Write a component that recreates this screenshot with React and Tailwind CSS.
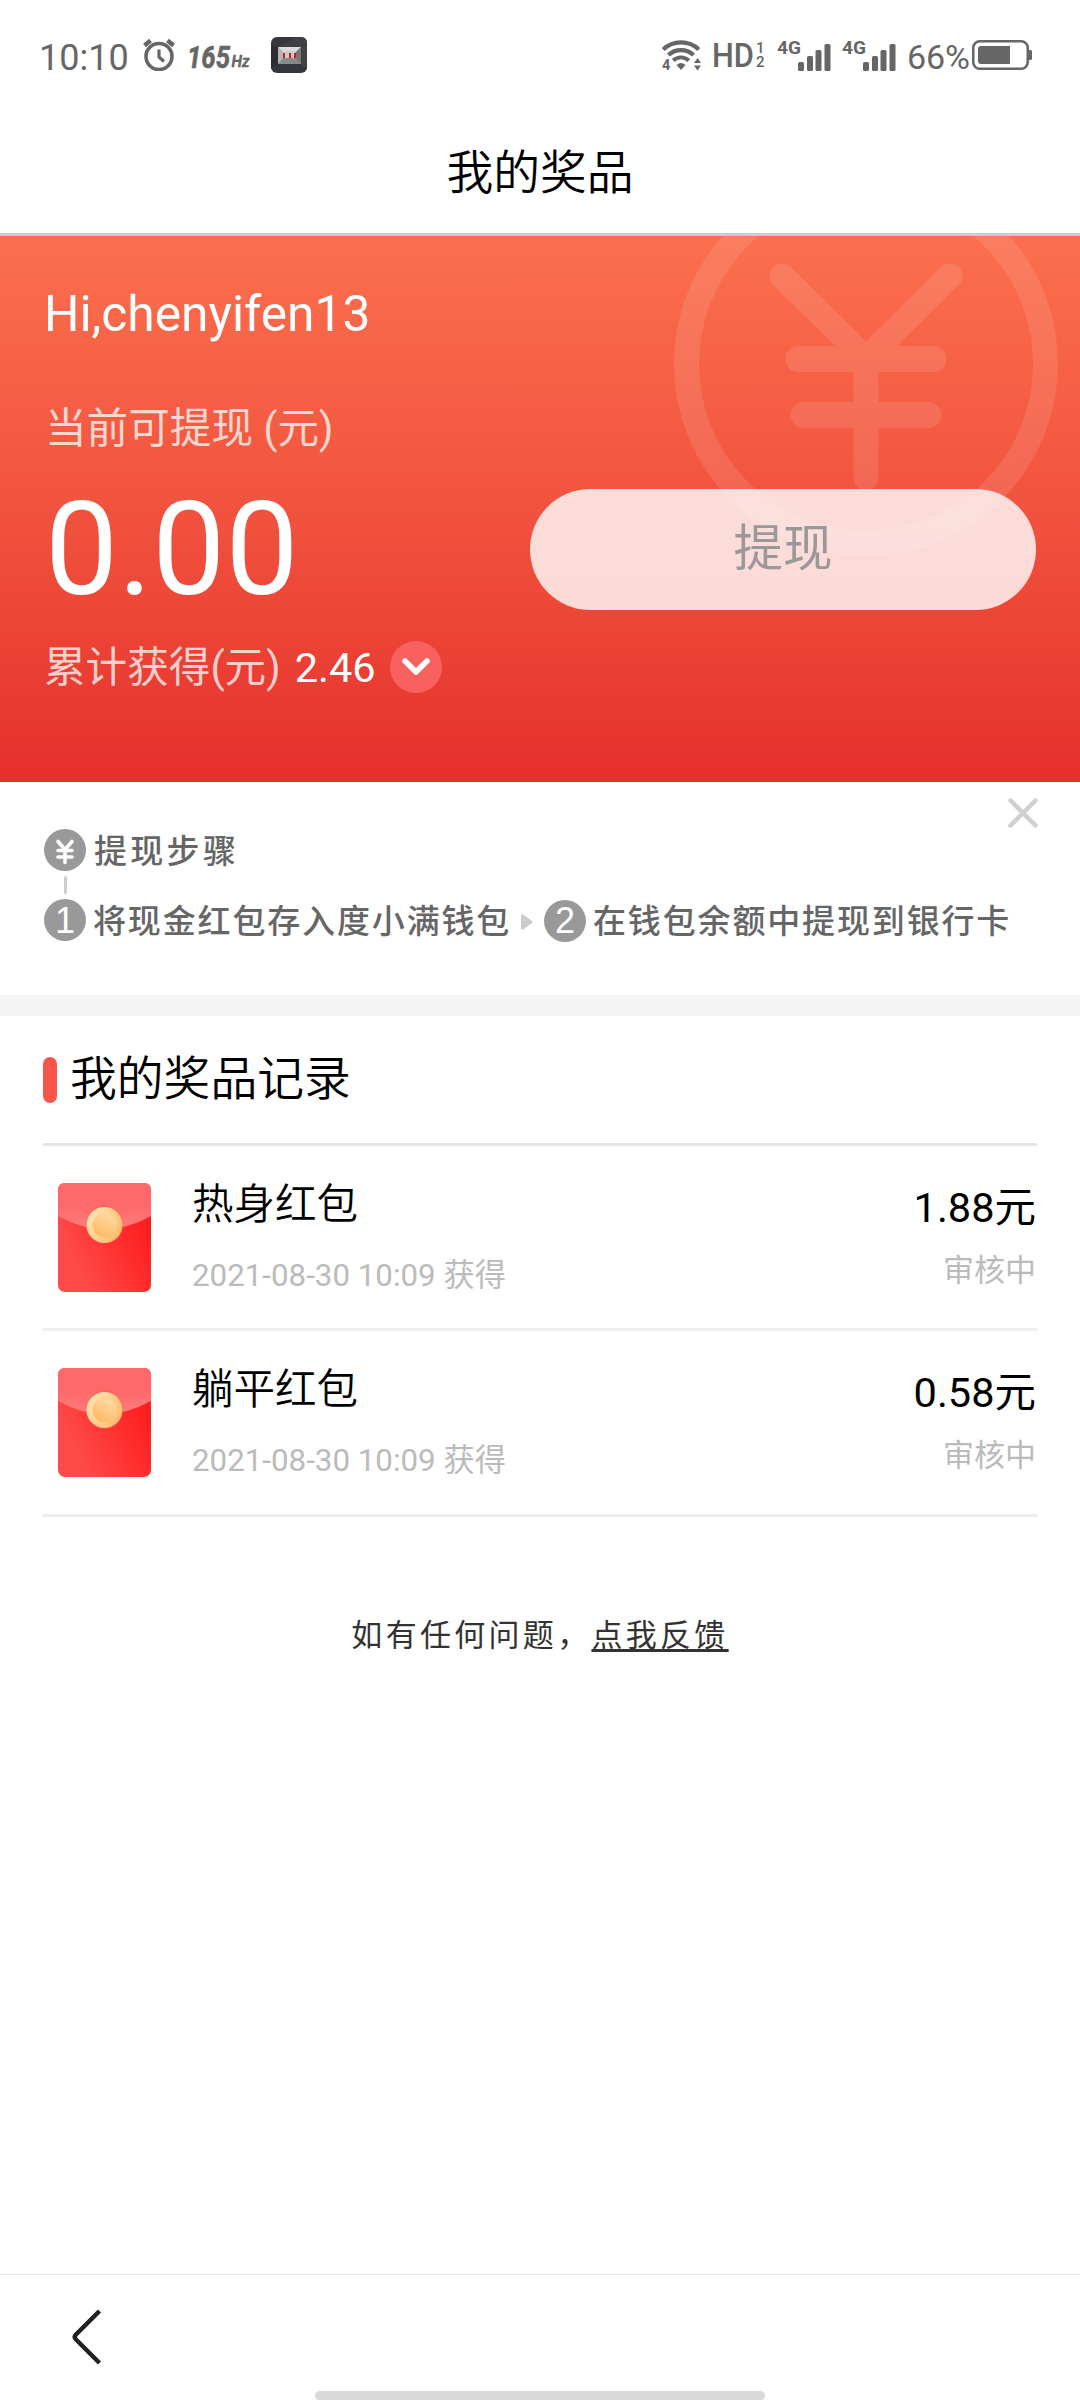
import React from 'react';

// CSS Styles
const styles = {
  page: "flex min-h-[2400px] w-[1080px] flex-col bg-white font-['Roboto','Noto_Sans_CJK_SC',sans-serif] text-black",
  mutedLabel: 'text-[41.6px] leading-[42px] text-white/75',
  stepText: 'relative top-[2px] whitespace-nowrap text-[33px] font-medium leading-[42px] text-[#666]',
};

const prizes = [
  { id: 1, name: '热身红包', time: '2021-08-30 10:09 获得', amount: '1.88元', status: '审核中' },
  { id: 2, name: '躺平红包', time: '2021-08-30 10:09 获得', amount: '0.58元', status: '审核中' },
];

const AlarmIcon = () => (
  <svg className="ml-[14px] h-8 w-8" viewBox="0 0 32 32" fill="none" stroke="#666">
    <circle cx="16" cy="17.5" r="13" strokeWidth="3.6" />
    <path d="M1.5 6.5 L7.5 1.5 M30.5 6.5 L24.5 1.5" strokeWidth="4.5" />
    <path d="M16 10.5 V18 L21 22.5" strokeWidth="3.2" />
  </svg>
);

const RefreshRate = () => (
  <svg className="ml-[11px] h-10 w-16" viewBox="0 -5 64 40" fill="#666" stroke="#666" fontFamily="Roboto" fontStyle="italic" fontWeight="700">
    <text x="1" y="27.5" fontSize="32" strokeWidth="0.6" textLength="43" lengthAdjust="spacingAndGlyphs">165</text>
    <text x="45.5" y="27" fontSize="17" strokeWidth="0.4" textLength="18" lengthAdjust="spacingAndGlyphs">Hz</text>
  </svg>
);

const AppBadge = () => (
  <svg className="ml-[21px] h-9 w-9" viewBox="0 0 36 36">
    <rect width="36" height="36" rx="6" fill="#36373d" />
    <path d="M0 9 L7 10 V27 L0 32 Z" fill="#2c2d32" />
    <path d="M7 10 L26 0 H30 Q36 0 36 6 V10 L30 10 Z" fill="#3f4046" />
    <path d="M30 27 L36 33 V10 L30 10 Z" fill="#414248" />
    <rect x="7" y="10" width="23" height="17" fill="#9a9a9a" />
    <path d="M7 10 H30 L22 18 H15 Z" fill="#dcdcdc" />
    <path d="M7 10 L15 18 L7 27 Z" fill="#b5b5b5" />
    <path d="M7 27 L15 18 H22 L30 27 Z" fill="#8a8a8a" />
    <path d="M30 10 L22 18 L30 27 Z" fill="#777" />
    <rect x="14" y="14" width="9" height="7" fill="#c9c9c9" />
    <path d="M12 16h2v5h-2z M18 16h2v5h-2z M23 16h2v5h-2z" fill="#d11a1a" />
  </svg>
);

const WifiIcon = () => (
  <svg className="h-10 w-10" viewBox="0 -4 40 40" fill="none" stroke="#666">
    <path d="M2.2 10.5 A26 26 0 0 1 37.8 10.5" strokeWidth="4.2" />
    <path d="M7.5 16 A18.5 18.5 0 0 1 32.5 16" strokeWidth="4.2" />
    <path d="M12.2 21.5 A11.5 11.5 0 0 1 27.8 21.5" strokeWidth="3.8" />
    <path d="M15.5 26 Q20 22 24.5 26 L20 31 Z" fill="#666" stroke="none" />
    <path d="M33 24 L36.5 19 L40 24 Z M33 26.5 L36.5 31.5 L40 26.5 Z" fill="#666" stroke="none" />
    <text x="1" y="31" fontSize="14.5" fontFamily="Roboto" fontWeight="700" fill="#666" stroke="none">4</text>
  </svg>
);

const HdIcon = () => (
  <div className="flex items-center">
    <svg className="ml-[9px] h-12 w-[46px]" viewBox="0 -8 46 48" fill="#666" fontFamily="Roboto">
      <text x="2" y="28" fontSize="33.5" fontWeight="500" textLength="42" lengthAdjust="spacingAndGlyphs">HD</text>
    </svg>
    <div className="flex w-[9px] flex-col text-[15px] font-medium leading-[14px]">
      <span>1</span>
      <span>2</span>
    </div>
  </div>
);

const SignalIcon = () => (
  <svg className="mr-[11px] h-[34px] w-[54px] overflow-visible" viewBox="0 0 54 34" fill="#666">
    <text x="0" y="15.5" fontSize="19" fontFamily="Roboto" fontWeight="700" textLength="24" lengthAdjust="spacingAndGlyphs">4G</text>
    <rect x="21" y="24" width="6" height="9" rx="1.5" />
    <rect x="30" y="18" width="6" height="15" rx="1.5" />
    <rect x="38.5" y="12" width="6" height="21" rx="1.5" />
    <rect x="47.5" y="6" width="6" height="27" rx="1.5" />
  </svg>
);

const BatteryIcon = () => (
  <svg className="ml-0.5 h-[30px] w-[60px]" viewBox="0 0 60 30">
    <rect x="1.25" y="1.25" width="54.5" height="27.5" rx="6.5" fill="none" stroke="#666" strokeWidth="2.5" />
    <path d="M6 9 Q6 6 9 6 H38 V24 H9 Q6 24 6 21 Z" fill="#666" />
    <path d="M56 10 H58.5 Q60 10 60 11.5 V18.5 Q60 20 58.5 20 H56 Z" fill="#666" />
  </svg>
);

const StatusBar = () => (
  <div className="flex h-[110px] items-center justify-between pl-[39px] pr-12 text-[#666]">
    <div className="flex items-center">
      <span className="pt-[5px] text-[36px] leading-none">10:10</span>
      <AlarmIcon />
      <RefreshRate />
      <AppBadge />
    </div>
    <div className="flex items-center">
      <WifiIcon />
      <HdIcon />
      <div className="ml-3 flex">
        <SignalIcon />
        <SignalIcon />
      </div>
      <span className="pt-[3px] text-[34px] leading-none">66%</span>
      <BatteryIcon />
    </div>
  </div>
);

// Large coin watermark behind the balance
const CoinWatermark = () => (
  <svg className="absolute right-[22px] top-[-64px] h-96 w-96" viewBox="0 0 384 384">
    <g opacity="0.105" fill="none" stroke="#fff" strokeWidth="25" strokeLinecap="round">
      <circle cx="192" cy="192" r="179.5" />
      <path d="M108 104 L192 187 L276 104" />
      <path d="M192 187 V306" />
      <path d="M124.5 187 H259.5 M129.5 243 H254.5" strokeWidth="26" />
    </g>
  </svg>
);

const CoinBadge = () => (
  <svg className="h-[42px] w-[42px]" viewBox="0 0 42 42" fill="none" stroke="#fff" strokeWidth="3.6" strokeLinecap="round">
    <circle cx="21" cy="21" r="21" fill="#999" stroke="none" />
    <path d="M14 12.5 L21 20.5 L28 12.5 M14 21.5 H28 M14 28 H28 M21 21 V33.5" />
  </svg>
);

const NumberBadge = ({ value }) => (
  <span className="flex h-[42px] w-[42px] shrink-0 items-center justify-center rounded-full bg-[#999] pt-px font-['Liberation_Sans'] text-[36px] leading-none text-white">
    {value}
  </span>
);

const RedEnvelope = () => (
  <svg className="h-[109px] w-[93px]" viewBox="0 0 93 109">
    <defs>
      <linearGradient id="envelopeBody" gradientUnits="userSpaceOnUse" x1="12" y1="75" x2="88" y2="40">
        <stop offset="0" stopColor="#ff4a4a" />
        <stop offset="1" stopColor="#ff1e1e" />
      </linearGradient>
      <linearGradient id="envelopeFlap" x1="0" y1="0" x2="0" y2="1">
        <stop offset="0.5" stopColor="#ff6969" />
        <stop offset="1" stopColor="#ff7d7d" />
      </linearGradient>
      <linearGradient id="coinOuter" x1="0" y1="0.2" x2="1" y2="0.8">
        <stop offset="0" stopColor="#ffe4b5" />
        <stop offset="1" stopColor="#ffb966" />
      </linearGradient>
      <linearGradient id="coinInner" x1="0.8" y1="0" x2="0.3" y2="1">
        <stop offset="0" stopColor="#ffdca6" />
        <stop offset="1" stopColor="#ffb964" />
      </linearGradient>
    </defs>
    <rect width="93" height="109" rx="7" fill="url(#envelopeBody)" />
    <path d="M0 7 Q0 0 7 0 H86 Q93 0 93 7 V33 Q46.5 59 0 33 Z" fill="url(#envelopeFlap)" />
    <circle cx="46.5" cy="42" r="19" fill="#ff4a3a" opacity="0.35" />
    <circle cx="46.5" cy="42" r="18" fill="url(#coinOuter)" />
    <circle cx="46.5" cy="42" r="12" fill="url(#coinInner)" />
  </svg>
);

const PrizeRow = ({ prize }) => (
  <li className="flex h-[185px] border-b-[3px] border-[#ededed] pl-[15px] last:h-[186px]">
    <div className="pt-[37px]">
      <RedEnvelope />
    </div>
    <div className="ml-[41px] flex-1 pt-[37px]">
      <p className="text-[41.5px] font-[350] leading-[44px]">{prize.name}</p>
      <p className="mt-[31px] text-[31.3px] leading-[36px] text-[#bbb]">{prize.time}</p>
    </div>
    <div className="pr-px pt-10 text-right">
      <p className="text-[41.5px] leading-[44px]">{prize.amount}</p>
      <p className="mt-[23px] text-[31px] leading-[36px] text-[#bbb]">{prize.status}</p>
    </div>
  </li>
);

const App = () => {
  return (
    <div className={styles.page}>
      <StatusBar />

      <header className="flex h-[126px] items-center justify-center border-b-[3px] border-[#ccc] pt-[3px]">
        <h1 className="text-[46.8px] font-[350] leading-none">我的奖品</h1>
      </header>

      {/* Balance */}
      <section className="relative h-[546px] overflow-hidden bg-linear-to-b from-[#fb6f4e] to-[#e62e2d] pl-[45px] pr-11 pt-[53px]">
        <CoinWatermark />
        <div className="relative">
          <p className="ml-[-1px] text-[49.7px] leading-[50px] text-white">Hi,chenyifen13</p>
          <p className={`mt-[69px] ${styles.mutedLabel}`}>当前可提现 (元)</p>
          <div className="mt-[39px] flex h-[121px] items-center justify-between">
            <span className="text-[130px] leading-none text-white">0.00</span>
            <button className="h-[121px] w-[506px] rounded-full bg-white/80 text-[49.5px] leading-none text-[#999]">提现</button>
          </div>
          <div className="mt-[31px] flex h-[52px] items-center">
            <span className={`ml-[-1px] mt-0.5 ${styles.mutedLabel}`}>累计获得(元)</span>
            <span className="ml-[14px] mt-0.5 text-[41.5px] leading-[42px] text-white">2.46</span>
            <span className="ml-[14px] flex h-[52px] w-[52px] items-center justify-center rounded-full bg-[#f8615d]">
              <svg className="h-6 w-8" viewBox="0 0 32 24" fill="none" stroke="#fff" strokeWidth="5.5" strokeLinecap="round" strokeLinejoin="round">
                <path d="M5 6 L16 17 L27 6" />
              </svg>
            </span>
          </div>
        </div>
      </section>

      {/* Withdrawal steps */}
      <section className="relative h-[213px] pl-11 pt-[47px]">
        <svg className="absolute right-[42px] top-4 h-[30px] w-[30px]" viewBox="0 0 30 30" stroke="#d0d0d0" strokeWidth="4.5" strokeLinecap="round">
          <path d="M2.5 2.5 L27.5 27.5 M27.5 2.5 L2.5 27.5" />
        </svg>
        <div className="flex h-[42px] items-center gap-[8px]">
          <CoinBadge />
          <span className={`tracking-[3.3px] ${styles.stepText}`}>提现步骤</span>
        </div>
        <div className="my-[5px] ml-5 h-[18px] w-[3px] rounded-full bg-[#ccc]" />
        <div className="flex h-[42px] items-center">
          <NumberBadge value="1" />
          <span className={`ml-[7px] w-[421px] tracking-[1.85px] ${styles.stepText}`}>将现金红包存入度小满钱包</span>
          <svg className="ml-[7px] mt-[3px] h-4 w-3" viewBox="0 0 12 16">
            <path d="M0 1.5 Q1 -0.5 3 1 L11 7 Q12 8 11 9 L3 15 Q1 16.5 0 14.5 Z" fill="#ccc" />
          </svg>
          <span className="ml-[11px] flex pt-px">
            <NumberBadge value="2" />
          </span>
          <span className={`ml-[7px] tracking-[1.85px] ${styles.stepText}`}>在钱包余额中提现到银行卡</span>
        </div>
      </section>

      <div className="h-[21px] bg-[#f4f4f4]" />

      {/* Prize records */}
      <section className="px-[43px]">
        <div className="flex h-[130px] items-center gap-[13px] border-b-[3px] border-[#e5e5e5]">
          <span className="h-[46px] w-[14px] rounded-full bg-[#fa5549]" />
          <h2 className="text-[46.8px] font-[350] leading-none">我的奖品记录</h2>
        </div>
        <ul>
          {prizes.map((prize) => (
            <PrizeRow key={prize.id} prize={prize} />
          ))}
        </ul>
      </section>

      <p className="mt-[99px] text-center text-[31px] leading-[40px] tracking-[3.3px] text-[#333]">
        如有任何问题，<a className="underline decoration-[3px] underline-offset-[3px] [text-decoration-skip-ink:none]">点我反馈</a>
      </p>

      {/* Bottom navigation */}
      <footer className="mt-auto flex h-[126px] flex-col items-center justify-between border-t border-[#e5e5e5]">
        <svg className="ml-[71px] mt-[34px] h-14 w-8 self-start" viewBox="0 0 32 56" fill="none" stroke="#222" strokeWidth="4.5">
          <path d="M28.5 2 L5 25.5 Q2.5 28 5 30.5 L28.5 54" />
        </svg>
        <div className="h-[9px] w-[450px] rounded-full bg-[#d9d9d9]" />
      </footer>
    </div>
  );
};

export default App;
